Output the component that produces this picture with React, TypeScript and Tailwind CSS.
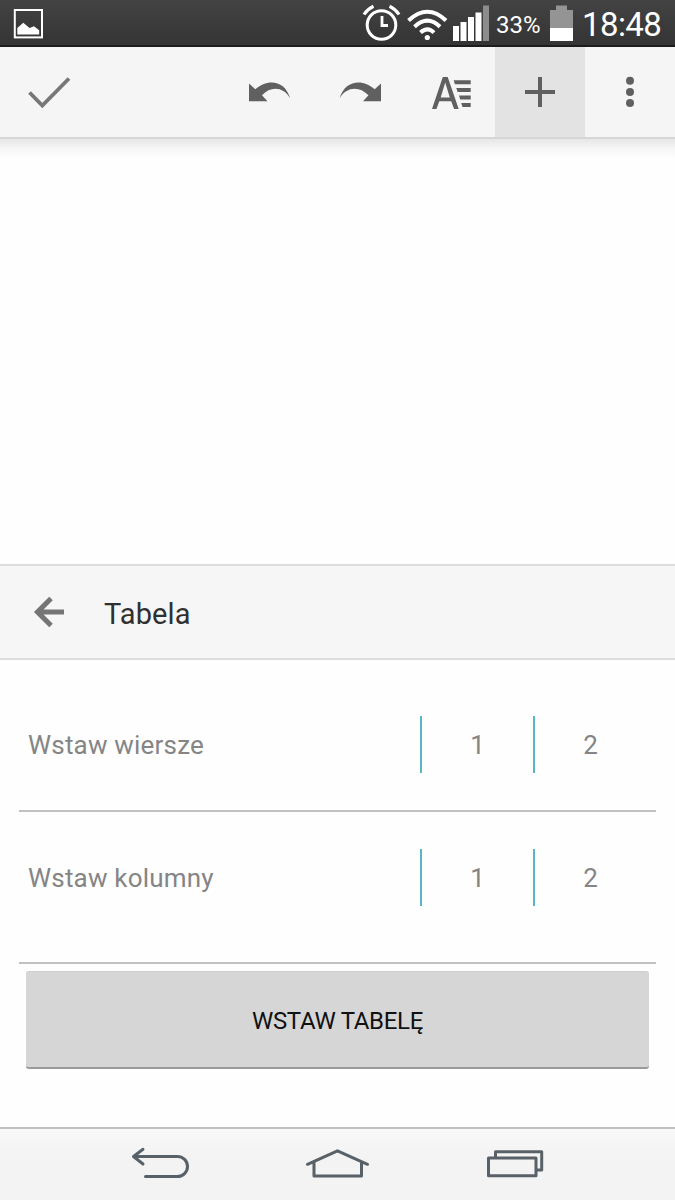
import React from "react";

const StatusBar: React.FC = () => (
    <header className="h-[47px] shrink-0 flex items-start bg-linear-to-b from-[#434343] to-[#343434] border-b-2 border-[#1c1c1c] text-white">
        <svg className="ml-[13px] mt-2 w-8 h-8" viewBox="13 8 32 32" aria-label="Obraz">
            <rect x="14.8" y="10" width="27.2" height="27.4" fill="none" stroke="#fff" strokeWidth="2" />
            <path d="M17.3 34.5V28L23.3 22.8 29.5 28 34 26.3 39.2 30.3V34.5Z" fill="#fff" />
        </svg>

        <div className="ml-auto flex items-start">
            {/* Alarm */}
            <svg className="w-10 h-[45px]" viewBox="361 0 40 45" fill="none" stroke="#fff">
                <circle cx="381.5" cy="25" r="14.3" strokeWidth="3" />
                <path d="M382 16V25.5H388" strokeWidth="2.8" />
                <path d="M364 14.5Q367.5 9 373.5 6.2M399 14.5Q395.5 9 389.5 6.2" strokeWidth="3.2" />
            </svg>
            {/* Wi-Fi */}
            <svg className="ml-1 w-[44px] h-[45px]" viewBox="405 0 44 45" fill="none" stroke="#fff" strokeWidth="4">
                <path d="M408.5 20.5Q427.5 3 446 20.5" />
                <path d="M414.5 26.7Q427.5 14.7 440 26.7" />
                <path d="M420.5 32.6Q427.5 26.3 434 32.6" />
                <circle cx="427.3" cy="37.5" r="2.6" fill="#fff" stroke="none" />
            </svg>
            {/* Signal */}
            <svg className="ml-[3px] w-[38px] h-[45px]" viewBox="452 0 38 45">
                <path d="M453 26H459V41H453ZM460.5 22H466.5V41H460.5ZM468 17H474V41H468ZM475.5 12.5H481.5V41H475.5Z" fill="#fff" />
                <path d="M483 5.5H489V41H483Z" fill="#8c8c8c" />
            </svg>
            <span className="ml-[6px] mt-[11px] w-[46px] font-[Roboto] text-[24px] leading-7 whitespace-nowrap">33%</span>
            {/* Battery */}
            <svg className="ml-2 w-6 h-[45px]" viewBox="550 0 24 45">
                <path d="M550 10H556V5.5H567V10H573V28H550Z" fill="#949494" />
                <path d="M550 28H573V41H550Z" fill="#fff" />
            </svg>
            <span className="ml-[8px] mt-[5px] w-[93px] font-[Roboto] text-[33px] tracking-[-0.6px] leading-10 whitespace-nowrap">18:48</span>
        </div>
    </header>
);

const Toolbar: React.FC = () => (
    <div className="shrink-0">
        <div className="flex h-[90px] bg-[#f5f5f5] text-[#606060]">
            <button className="w-[90px]" aria-label="Gotowe">
                <svg className="w-[90px] h-[90px]" viewBox="0 47 90 90">
                    <path d="M29.5 92.5L42.3 105.5 69 78.5" fill="none" stroke="#777" strokeWidth="3.8" />
                </svg>
            </button>
            <button className="ml-auto w-[90px]" aria-label="Cofnij">
                <svg className="w-[90px] h-[90px]" viewBox="225 47 90 90" fill="currentColor">
                    <path d="M249 83.5L255.3 89.3C267 78.5 285 79.5 290.2 98.5C284 87 271 85.5 262 95.3L267.5 101.3H249Z" />
                </svg>
            </button>
            <button className="w-[90px]" aria-label="Ponów">
                <svg className="w-[90px] h-[90px]" viewBox="315 47 90 90" fill="currentColor">
                    <path d="M381 83.5L374.7 89.3C363 78.5 345 79.5 339.5 98.5C346 87 359 85.5 368.5 95.3L363 101.3H381Z" />
                </svg>
            </button>
            <button className="w-[90px]" aria-label="Formatowanie">
                <svg className="w-[90px] h-[90px]" viewBox="405 47 90 90" fill="currentColor">
                    <path
                        fillRule="evenodd"
                        d="M442.8 77H447.7L458.7 109H454.1L451.2 101.3H439.3L436.4 109H432ZM445.2 82.5L440.7 97.4H449.8Z"
                    />
                    <path d="M453.7 80.3H470.7V84.3H454.9ZM456.3 88H470.7V92H457.6ZM459 95.5H470.7V99.5H460.2ZM461.2 103H470.7V107H462.5Z" />
                </svg>
            </button>
            <button className="w-[90px] bg-[#e3e3e3]" aria-label="Wstaw">
                <svg className="w-[90px] h-[90px]" viewBox="495 47 90 90">
                    <path d="M525 92H555M540 77V107" stroke="currentColor" strokeWidth="4" />
                </svg>
            </button>
            <button className="w-[90px]" aria-label="Więcej">
                <svg className="w-[90px] h-[90px]" viewBox="585 47 90 90" fill="currentColor">
                    <circle cx="630" cy="80.7" r="4" />
                    <circle cx="630" cy="92" r="4" />
                    <circle cx="630" cy="103" r="4" />
                </svg>
            </button>
        </div>
        <div className="h-[2px] bg-[#d6d6d6]" />
        <div className="h-5 bg-linear-to-b from-[#e6e6e6] via-[#f7f7f7] to-[#fefefe]" />
    </div>
);

interface PickerRowProps {
    label: string;
    values: number[];
}

const PickerRow: React.FC<PickerRowProps> = ({ label, values }) => (
    <div className="flex items-center h-[57px] pl-[9px] text-[#858585] font-[Roboto] text-[26px]">
        <span className="w-[392px] tracking-[0.2px] pt-[2px]">{label}</span>
        {values.map((value) => (
            <div
                key={value}
                className="w-[113px] h-[57px] pt-[2px] border-l-2 border-[#5ab4c5] flex items-center justify-center"
            >
                {value}
            </div>
        ))}
    </div>
);

const NavigationBar: React.FC = () => (
    <nav className="h-[73px] shrink-0 border-t-2 border-[#bfc2c5] bg-linear-to-b from-[#f8f8f8] to-[#f3f3f3] to-40% text-[#596168]">
        <div className="flex h-[71px] pl-[130px]">
            <svg className="w-[62px] h-[71px]" viewBox="130 1129 62 71" fill="none" stroke="currentColor" strokeWidth="3" strokeLinecap="round" strokeLinejoin="round">
                <path d="M134 1156.5H177.5A9.8 9.8 0 0 1 177.5 1176.5H145.5M143 1149.3L133.5 1156.5 143 1164" />
            </svg>
            <svg className="ml-[112px] w-[68px] h-[71px]" viewBox="304 1129 68 71" fill="none" stroke="currentColor" strokeWidth="3" strokeLinecap="round" strokeLinejoin="round">
                <path d="M307.5 1164.3L337.5 1150.8 367.5 1164.3M314 1162V1176H361.5V1162" />
            </svg>
            <svg className="ml-[113px] w-[60px] h-[71px]" viewBox="485 1129 60 71" fill="none" stroke="currentColor" strokeWidth="3" strokeLinejoin="round">
                <rect x="488.5" y="1158" width="47.5" height="17.8" />
                <path d="M495.5 1157V1151.7H541.7V1170H537" />
            </svg>
        </div>
    </nav>
);

/**
 * App Component
 * Document editor with the "insert table" panel open at the bottom.
 */
const App: React.FC = () => {
    return (
        <div className="w-[675px] h-[1200px] flex flex-col bg-[#fefefe] overflow-hidden">
            <StatusBar />
            <Toolbar />

            {/* Empty document */}
            <main className="flex-1" />

            {/* Table panel */}
            <section className="h-[563px] shrink-0" aria-labelledby="panel-heading">
                <div className="h-24 flex items-center border-y-2 border-[#dcdcdc] bg-[#f6f6f6]">
                    <svg className="ml-8 w-9 h-[92px]" viewBox="32 566 36 92" fill="none" stroke="#757575" strokeWidth="5">
                        <path d="M64 612H37.5M51 598.5L37.5 612 51 625.5" />
                    </svg>
                    <h2 id="panel-heading" className="ml-[36px] pt-[5px] font-[Roboto] text-[29px] tracking-[0.1px] text-[#303030]">
                        Tabela
                    </h2>
                </div>

                <div className="mx-[19px]">
                    <div className="h-[152px] pt-14 border-b-2 border-[#c1c1c1]">
                        <PickerRow label="Wstaw wiersze" values={[1, 2]} />
                    </div>
                    <div className="h-[152px] pt-[37px] border-b-2 border-[#c1c1c1]">
                        <PickerRow label="Wstaw kolumny" values={[1, 2]} />
                    </div>
                    <button className="block mx-[7px] mt-[7px] pt-[2px] w-[623px] h-[98px] rounded-[3px] bg-[#d6d6d6] border-t border-t-[#cecece] border-b-2 border-b-[#9a9a9a] font-[Roboto] text-[24px] tracking-[-0.3px] text-[#111]">
                        WSTAW TABELĘ
                    </button>
                </div>
            </section>

            <NavigationBar />
        </div>
    );
};

export default App;
